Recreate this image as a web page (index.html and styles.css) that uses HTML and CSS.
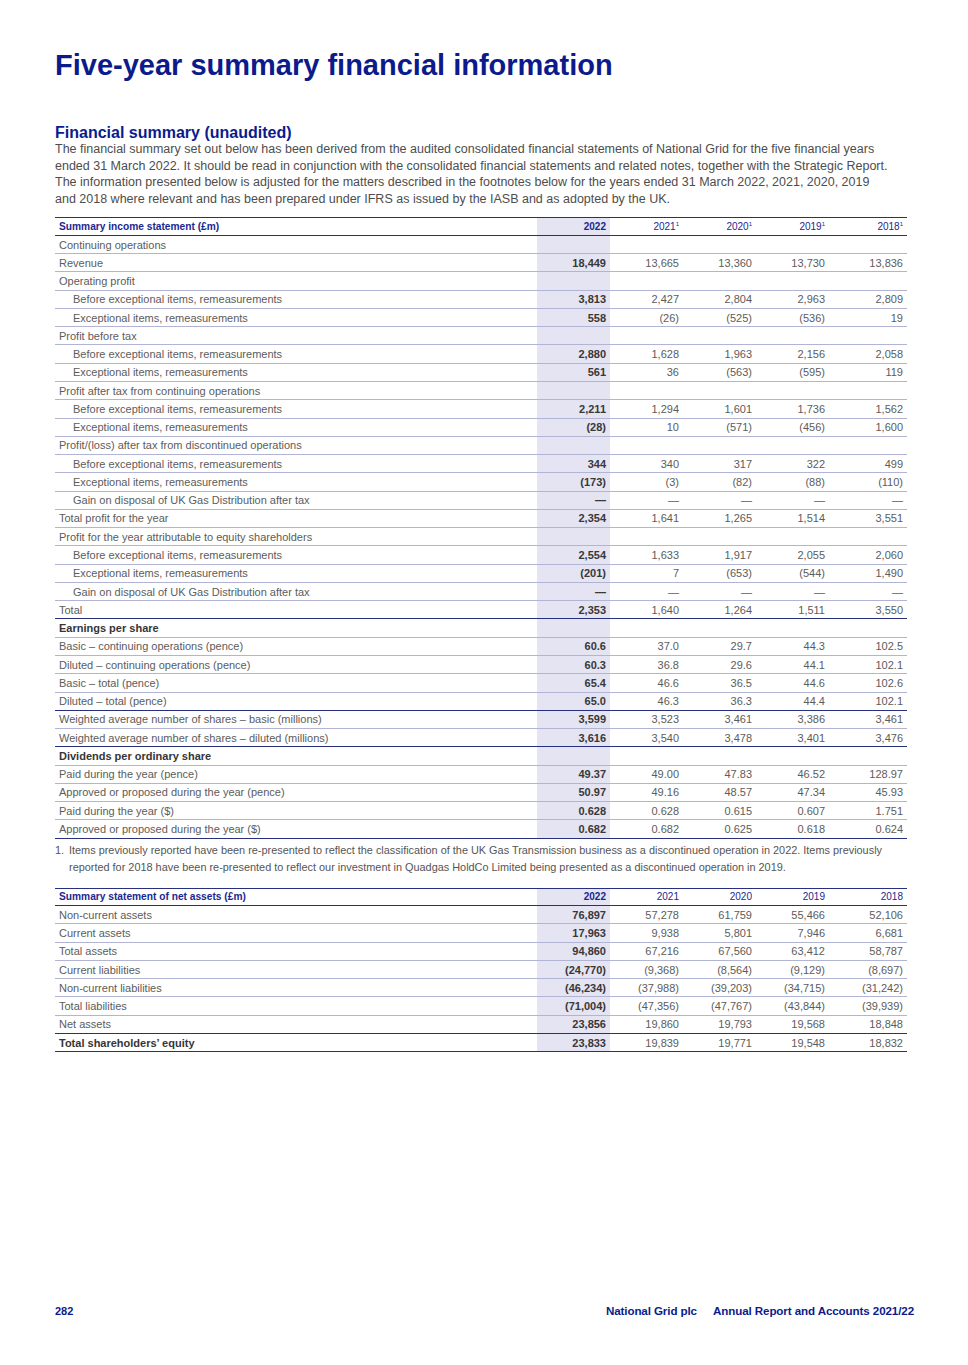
FILE: index.html
```html
<!DOCTYPE html>
<html lang="en">
<head>
<meta charset="utf-8">
<title>Five-year summary financial information</title>
<link rel="stylesheet" href="styles.css">
</head>
<body>
<div class="page">
  <h1 class="title">Five-year summary financial information</h1>

  <section class="intro">
    <h2 class="subtitle">Financial summary (unaudited)</h2>
    <p class="lead">The financial summary set out below has been derived from the audited consolidated financial statements of National Grid for the five financial years<br>ended 31 March 2022. It should be read in conjunction with the consolidated financial statements and related notes, together with the Strategic Report.<br>The information presented below is adjusted for the matters described in the footnotes below for the years ended 31 March 2022, 2021, 2020, 2019<br>and 2018 where relevant and has been prepared under IFRS as issued by the IASB and as adopted by the UK.</p>
  </section>

  <table class="fin">
    <colgroup>
      <col class="c-label"><col class="c-cur"><col class="c-yr"><col class="c-yr"><col class="c-yr"><col class="c-last">
    </colgroup>
    <thead>
      <tr>
        <th class="lbl">Summary income statement (£m)</th>
        <th class="cur">2022</th>
        <th>2021<sup>1</sup></th>
        <th>2020<sup>1</sup></th>
        <th>2019<sup>1</sup></th>
        <th>2018<sup>1</sup></th>
      </tr>
    </thead>
    <tbody>
      <tr><td class="lbl">Continuing operations</td><td class="cur"></td><td></td><td></td><td></td><td></td></tr>
      <tr><td class="lbl">Revenue</td><td class="cur">18,449</td><td>13,665</td><td>13,360</td><td>13,730</td><td>13,836</td></tr>
      <tr><td class="lbl">Operating profit</td><td class="cur"></td><td></td><td></td><td></td><td></td></tr>
      <tr><td class="lbl sub">Before exceptional items, remeasurements</td><td class="cur">3,813</td><td>2,427</td><td>2,804</td><td>2,963</td><td>2,809</td></tr>
      <tr><td class="lbl sub">Exceptional items, remeasurements</td><td class="cur">558</td><td>(26)</td><td>(525)</td><td>(536)</td><td>19</td></tr>
      <tr><td class="lbl">Profit before tax</td><td class="cur"></td><td></td><td></td><td></td><td></td></tr>
      <tr><td class="lbl sub">Before exceptional items, remeasurements</td><td class="cur">2,880</td><td>1,628</td><td>1,963</td><td>2,156</td><td>2,058</td></tr>
      <tr><td class="lbl sub">Exceptional items, remeasurements</td><td class="cur">561</td><td>36</td><td>(563)</td><td>(595)</td><td>119</td></tr>
      <tr><td class="lbl">Profit after tax from continuing operations</td><td class="cur"></td><td></td><td></td><td></td><td></td></tr>
      <tr><td class="lbl sub">Before exceptional items, remeasurements</td><td class="cur">2,211</td><td>1,294</td><td>1,601</td><td>1,736</td><td>1,562</td></tr>
      <tr><td class="lbl sub">Exceptional items, remeasurements</td><td class="cur">(28)</td><td>10</td><td>(571)</td><td>(456)</td><td>1,600</td></tr>
      <tr><td class="lbl">Profit/(loss) after tax from discontinued operations</td><td class="cur"></td><td></td><td></td><td></td><td></td></tr>
      <tr><td class="lbl sub">Before exceptional items, remeasurements</td><td class="cur">344</td><td>340</td><td>317</td><td>322</td><td>499</td></tr>
      <tr><td class="lbl sub">Exceptional items, remeasurements</td><td class="cur">(173)</td><td>(3)</td><td>(82)</td><td>(88)</td><td>(110)</td></tr>
      <tr><td class="lbl sub">Gain on disposal of UK Gas Distribution after tax</td><td class="cur">—</td><td>—</td><td>—</td><td>—</td><td>—</td></tr>
      <tr><td class="lbl">Total profit for the year</td><td class="cur">2,354</td><td>1,641</td><td>1,265</td><td>1,514</td><td>3,551</td></tr>
      <tr><td class="lbl">Profit for the year attributable to equity shareholders</td><td class="cur"></td><td></td><td></td><td></td><td></td></tr>
      <tr><td class="lbl sub">Before exceptional items, remeasurements</td><td class="cur">2,554</td><td>1,633</td><td>1,917</td><td>2,055</td><td>2,060</td></tr>
      <tr><td class="lbl sub">Exceptional items, remeasurements</td><td class="cur">(201)</td><td>7</td><td>(653)</td><td>(544)</td><td>1,490</td></tr>
      <tr><td class="lbl sub">Gain on disposal of UK Gas Distribution after tax</td><td class="cur">—</td><td>—</td><td>—</td><td>—</td><td>—</td></tr>
      <tr class="rule"><td class="lbl">Total</td><td class="cur">2,353</td><td>1,640</td><td>1,264</td><td>1,511</td><td>3,550</td></tr>
      <tr><td class="lbl strong">Earnings per share</td><td class="cur"></td><td></td><td></td><td></td><td></td></tr>
      <tr><td class="lbl">Basic – continuing operations (pence)</td><td class="cur">60.6</td><td>37.0</td><td>29.7</td><td>44.3</td><td>102.5</td></tr>
      <tr><td class="lbl">Diluted – continuing operations (pence)</td><td class="cur">60.3</td><td>36.8</td><td>29.6</td><td>44.1</td><td>102.1</td></tr>
      <tr><td class="lbl">Basic – total (pence)</td><td class="cur">65.4</td><td>46.6</td><td>36.5</td><td>44.6</td><td>102.6</td></tr>
      <tr class="rule"><td class="lbl">Diluted – total (pence)</td><td class="cur">65.0</td><td>46.3</td><td>36.3</td><td>44.4</td><td>102.1</td></tr>
      <tr><td class="lbl">Weighted average number of shares – basic (millions)</td><td class="cur">3,599</td><td>3,523</td><td>3,461</td><td>3,386</td><td>3,461</td></tr>
      <tr class="rule"><td class="lbl">Weighted average number of shares – diluted (millions)</td><td class="cur">3,616</td><td>3,540</td><td>3,478</td><td>3,401</td><td>3,476</td></tr>
      <tr><td class="lbl strong">Dividends per ordinary share</td><td class="cur"></td><td></td><td></td><td></td><td></td></tr>
      <tr><td class="lbl">Paid during the year (pence)</td><td class="cur">49.37</td><td>49.00</td><td>47.83</td><td>46.52</td><td>128.97</td></tr>
      <tr><td class="lbl">Approved or proposed during the year (pence)</td><td class="cur">50.97</td><td>49.16</td><td>48.57</td><td>47.34</td><td>45.93</td></tr>
      <tr><td class="lbl">Paid during the year ($)</td><td class="cur">0.628</td><td>0.628</td><td>0.615</td><td>0.607</td><td>1.751</td></tr>
      <tr class="rule"><td class="lbl">Approved or proposed during the year ($)</td><td class="cur">0.682</td><td>0.682</td><td>0.625</td><td>0.618</td><td>0.624</td></tr>
    </tbody>
  </table>

  <ol class="notes">
    <li><span class="num">1.</span><span class="note-text">Items previously reported have been re-presented to reflect the classification of the UK Gas Transmission business as a discontinued operation in 2022. Items previously<br>reported for 2018 have been re-presented to reflect our investment in Quadgas HoldCo Limited being presented as a discontinued operation in 2019.</span></li>
  </ol>

  <table class="fin fin-assets">
    <colgroup>
      <col class="c-label"><col class="c-cur"><col class="c-yr"><col class="c-yr"><col class="c-yr"><col class="c-last">
    </colgroup>
    <thead>
      <tr>
        <th class="lbl">Summary statement of net assets (£m)</th>
        <th class="cur">2022</th>
        <th>2021</th>
        <th>2020</th>
        <th>2019</th>
        <th>2018</th>
      </tr>
    </thead>
    <tbody>
      <tr><td class="lbl">Non-current assets</td><td class="cur">76,897</td><td>57,278</td><td>61,759</td><td>55,466</td><td>52,106</td></tr>
      <tr><td class="lbl">Current assets</td><td class="cur">17,963</td><td>9,938</td><td>5,801</td><td>7,946</td><td>6,681</td></tr>
      <tr><td class="lbl">Total assets</td><td class="cur">94,860</td><td>67,216</td><td>67,560</td><td>63,412</td><td>58,787</td></tr>
      <tr><td class="lbl">Current liabilities</td><td class="cur">(24,770)</td><td>(9,368)</td><td>(8,564)</td><td>(9,129)</td><td>(8,697)</td></tr>
      <tr><td class="lbl">Non-current liabilities</td><td class="cur">(46,234)</td><td>(37,988)</td><td>(39,203)</td><td>(34,715)</td><td>(31,242)</td></tr>
      <tr><td class="lbl">Total liabilities</td><td class="cur">(71,004)</td><td>(47,356)</td><td>(47,767)</td><td>(43,844)</td><td>(39,939)</td></tr>
      <tr class="rule"><td class="lbl">Net assets</td><td class="cur">23,856</td><td>19,860</td><td>19,793</td><td>19,568</td><td>18,848</td></tr>
      <tr class="rule"><td class="lbl strong">Total shareholders’ equity</td><td class="cur">23,833</td><td>19,839</td><td>19,771</td><td>19,548</td><td>18,832</td></tr>
    </tbody>
  </table>

  <footer class="footer">
    <span class="folio">282</span>
    <span class="running">
      <span>National Grid plc</span>
      <span>Annual Report and Accounts 2021/22</span>
    </span>
  </footer>
</div>
</body>
</html>
```

FILE: styles.css
```css
html, body {
  margin: 0;
  padding: 0;
  background: #ffffff;
}

body {
  font-family: "Liberation Sans", Arial, sans-serif;
  color: #555555;
}

.page {
  width: 968px;
  height: 1365px;
  box-sizing: border-box;
  padding: 51px 61px 0 55px;
  display: flex;
  flex-direction: column;
  position: relative;
}

.title {
  margin: 0;
  font-size: 29px;
  line-height: 29px;
  font-weight: bold;
  color: #0b1b8c;
  letter-spacing: 0;
}

.intro {
  margin-top: 45px;
}

.subtitle {
  margin: 0;
  font-size: 16px;
  line-height: 16px;
  font-weight: bold;
  color: #0b1b8c;
}

.lead {
  margin: 0;
  font-size: 12.5px;
  line-height: 16.6px;
  color: #4d4d4d;
  white-space: nowrap;
}

.fin {
  margin-top: 10px;
  width: 852px;
  border-collapse: collapse;
  table-layout: fixed;
  font-size: 11px;
  border-top: 1.5px solid #26307e;
}

.c-label { width: 482px; }
.c-cur { width: 73px; }
.c-yr { width: 73px; }
.c-last { width: 78px; }

.fin th {
  height: 16.5px;
  padding: 0 4px;
  font-weight: normal;
  font-size: 10px;
  color: #1b2790;
  text-align: right;
  border-bottom: 1.5px solid #26307e;
  white-space: nowrap;
}

.fin th.lbl {
  text-align: left;
  font-weight: bold;
  font-size: 10.2px;
  color: #1b2790;
}

.fin th.cur {
  font-weight: bold;
}

.fin sup {
  font-size: 6px;
  vertical-align: 4px;
  line-height: 0;
}

.fin td {
  height: 17.27px;
  padding: 0 4px;
  text-align: right;
  color: #5c5c5c;
  border-bottom: 1px solid #b1b4d3;
  white-space: nowrap;
}

.fin .cur {
  background: #e4e4f2;
}

.fin td.cur {
  font-weight: bold;
  color: #383838;
}

.fin td.lbl {
  text-align: left;
}

.fin td.sub {
  padding-left: 18px;
}

.fin td.strong {
  font-weight: bold;
  color: #363636;
}

.fin tr.rule td {
  border-bottom: 1.5px solid #26307e;
}

.notes {
  list-style: none;
  margin: 3px 0 0 0;
  padding: 0;
  width: 852px;
  font-size: 10.9px;
  line-height: 17px;
  color: #555555;
  white-space: nowrap;
}

.notes li {
  display: flex;
}

.notes .num {
  flex: 0 0 14px;
}

.fin-assets {
  margin-top: 12px;
}

.footer {
  position: absolute;
  left: 55px;
  right: 54px;
  top: 1304px;
  display: flex;
  justify-content: space-between;
  align-items: baseline;
  font-size: 11px;
  font-weight: bold;
  color: #0b1b8c;
}

.running {
  display: flex;
  gap: 16px;
  font-size: 11.6px;
  letter-spacing: -0.1px;
}
```
